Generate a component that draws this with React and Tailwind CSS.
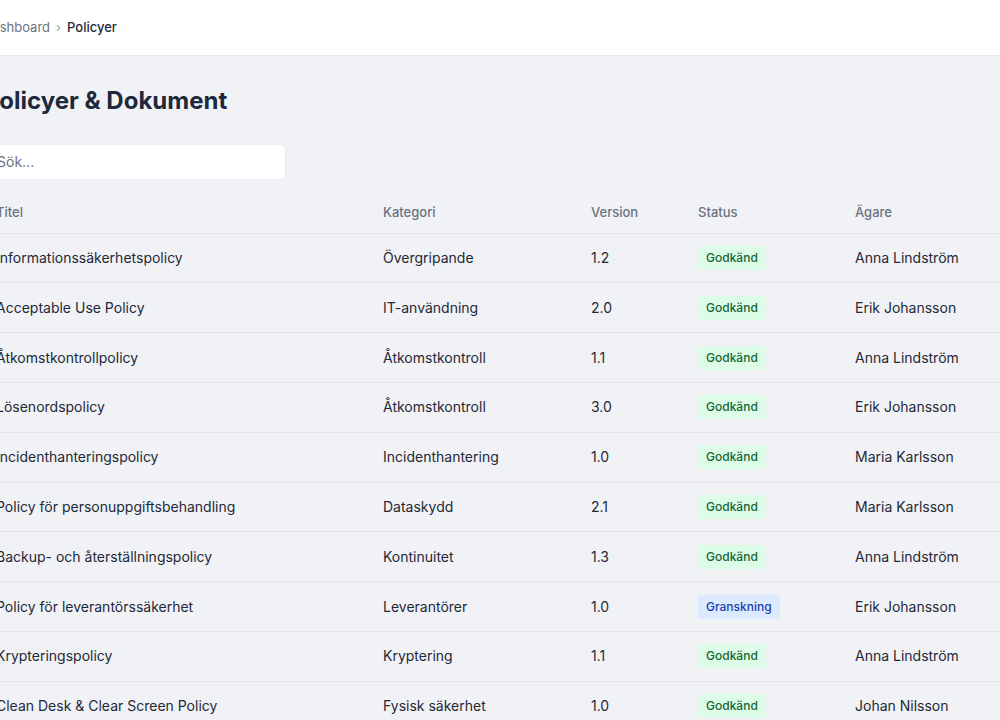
const rows = [
  ['Informationssäkerhetspolicy', 'Övergripande', '1.2', 'Godkänd', 'Anna Lindström'],
  ['Acceptable Use Policy', 'IT-användning', '2.0', 'Godkänd', 'Erik Johansson'],
  ['Åtkomstkontrollpolicy', 'Åtkomstkontroll', '1.1', 'Godkänd', 'Anna Lindström'],
  ['Lösenordspolicy', 'Åtkomstkontroll', '3.0', 'Godkänd', 'Erik Johansson'],
  ['Incidenthanteringspolicy', 'Incidenthantering', '1.0', 'Godkänd', 'Maria Karlsson'],
  ['Policy för personuppgiftsbehandling', 'Dataskydd', '2.1', 'Godkänd', 'Maria Karlsson'],
  ['Backup- och återställningspolicy', 'Kontinuitet', '1.3', 'Godkänd', 'Anna Lindström'],
  ['Policy för leverantörssäkerhet', 'Leverantörer', '1.0', 'Granskning', 'Erik Johansson'],
  ['Krypteringspolicy', 'Kryptering', '1.1', 'Godkänd', 'Anna Lindström'],
  ['Clean Desk & Clear Screen Policy', 'Fysisk säkerhet', '1.0', 'Godkänd', 'Johan Nilsson'],
  ['Policy för fjärrarbete', 'IT-användning', '1.0', 'Godkänd', 'Erik Johansson'],
]

function Badge({ status }) {
  const cls =
    status === 'Granskning'
      ? 'bg-[#dbeafe] text-[#1e40af]'
      : 'bg-[#dcfce7] text-[#166534]'
  return (
    <span className={`inline-block rounded px-2 py-[3px] text-xs font-medium leading-[18px] ${cls}`}>
      {status}
    </span>
  )
}

export default function App() {
  return (
    <div className="h-[720px] overflow-hidden bg-[#f1f2f6] font-['Inter',sans-serif] text-[#1f2937]">
      <header className="h-[56px] bg-white border-b border-[#e9eaee] flex items-center">
        <div className="ml-[-17px] flex items-center gap-[6px] text-[13px]">
          <span className="text-[#6b7280]">Dashboard</span>
          <span className="text-[#9ca3af]">›</span>
          <span className="font-medium text-[#1f2937]">Policyer</span>
        </div>
      </header>

      <main className="ml-[-16px] pt-[29px]">
        <h1 className="text-[24px] font-bold leading-[32px] text-[#1e293b]">Policyer &amp; Dokument</h1>

        <div className="mt-[27px] w-[302px] h-[36px] bg-white rounded-md border border-[#eceef2] flex items-center px-3">
          <span className="text-sm text-[#6b7280]">Sök...</span>
        </div>

        <table className="mt-[12px] w-[1100px] table-fixed border-collapse text-sm">
          <thead>
            <tr className="border-b border-[#e2e4e9]">
              <th className="w-[387px] px-3 py-[11px] text-left text-[13px] font-medium text-[#6b7280]">Titel</th>
              <th className="w-[208px] px-3 py-[11px] text-left text-[13px] font-medium text-[#6b7280]">Kategori</th>
              <th className="w-[107px] px-3 py-[11px] text-left text-[13px] font-medium text-[#6b7280]">Version</th>
              <th className="w-[157px] px-3 py-[11px] text-left text-[13px] font-medium text-[#6b7280]">Status</th>
              <th className="px-3 py-[11px] text-left text-[13px] font-medium text-[#6b7280]">Ägare</th>
            </tr>
          </thead>
          <tbody>
            {rows.map((r) => (
              <tr key={r[0]} className="h-[49.8px] border-b border-[#e2e4e9]">
                <td className="px-3 text-[#1f2937]">{r[0]}</td>
                <td className="px-3 text-[#1f2937]">{r[1]}</td>
                <td className="px-3 text-[#1f2937]">{r[2]}</td>
                <td className="px-3"><Badge status={r[3]} /></td>
                <td className="px-3 text-[#1f2937]">{r[4]}</td>
              </tr>
            ))}
          </tbody>
        </table>
      </main>
    </div>
  )
}
